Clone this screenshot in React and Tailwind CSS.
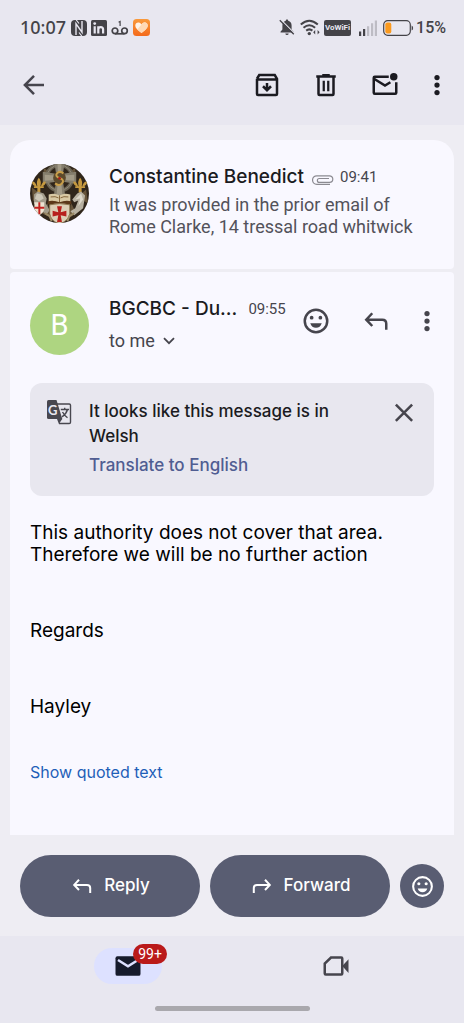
import { useState } from 'react';

const Icon = ({ className = 'size-[30px]', children }) => (
  <svg viewBox="0 0 24 24" className={className} fill="none" stroke="currentColor" strokeWidth="2" aria-hidden="true">
    {children}
  </svg>
);

const ArrowBack = () => (
  <Icon>
    <path d="M20 12H5.5M12 4.7L4.7 12l7.3 7.3" />
  </Icon>
);

const Archive = () => (
  <Icon>
    <path d="M4 7v12.2q0 .8.8.8h14.4q.8 0 .8-.8V7L18.2 4H5.8L4 7M4 7.6h16" />
    <path d="M12 10.3v5.5M8.8 13l3.2 3.2 3.2-3.2" />
  </Icon>
);

const Trash = () => (
  <Icon>
    <path d="M4.2 5.2h15.6M9 4.2h6M6 5.5v13.7q0 .8.8.8h10.4q.8 0 .8-.8V5.5" />
    <path d="M10.2 8.5V17M13.8 8.5V17" strokeWidth="1.8" />
  </Icon>
);

const MarkUnread = () => (
  <Icon>
    <path d="M15 5.3H3.8q-.8 0-.8.8v12.1q0 .8.8.8h16.4q.8 0 .8-.8V9.7" />
    <path d="M3.5 7.2l8.5 5.3 4.3-2.7" />
    <circle cx="19" cy="5.3" r="3" fill="currentColor" stroke="none" />
  </Icon>
);

const More = () => (
  <Icon>
    <g fill="currentColor" stroke="none">
      <circle cx="12" cy="6" r="2.1" />
      <circle cx="12" cy="12" r="2.1" />
      <circle cx="12" cy="18" r="2.1" />
    </g>
  </Icon>
);

const Smiley = ({ className }) => (
  <Icon className={className}>
    <circle cx="12" cy="12" r="9" />
    <g fill="currentColor" stroke="none">
      <circle cx="8.5" cy="9.3" r="1.5" />
      <circle cx="15.5" cy="9.3" r="1.5" />
      <path d="M7.4 13.8h9.2q-1.2 3.6-4.6 3.6t-4.6-3.6z" />
    </g>
  </Icon>
);

const ReplyIcon = ({ className }) => (
  <Icon className={className}>
    <path d="M9 5.8L4.2 10.9 9 16M4.2 10.9H17q3.2 0 3.2 3.2V19" />
  </Icon>
);

const ForwardIcon = ({ className }) => (
  <Icon className={className}>
    <path d="M15 5.8l4.8 5.1L15 16M19.8 10.9H7q-3.2 0-3.2 3.2V19" />
  </Icon>
);

const Nfc = () => (
  <svg viewBox="0 0 16 16" className="size-4" aria-hidden="true">
    <rect width="16" height="16" rx="4" fill="#444348" />
    <path d="M5 15V3.8l6 8.4V1" fill="none" stroke="#e8e7f0" strokeWidth="1.4" />
    <path d="M5.2 0L8 3.5M8 12.5l2.8 3.5" stroke="#e8e7f0" strokeWidth="1.2" />
  </svg>
);

const LinkedIn = () => (
  <svg viewBox="0 0 16 16" className="size-4" aria-hidden="true">
    <rect width="16" height="16" rx="1.5" fill="#444348" />
    <g fill="none" stroke="#e8e7f0" strokeWidth="2.2">
      <path d="M3.7 6.2v7.2M7.3 6.2v7.2M7.3 9.6q0-2.4 2.4-2.4t2.4 2.4v3.8" />
    </g>
    <circle cx="3.7" cy="3.6" r="1.4" fill="#e8e7f0" />
  </svg>
);

const Voicemail = () => (
  <svg viewBox="0 0 18 16" className="h-4 w-[18px]" fill="none" stroke="#444348" strokeWidth="1.7" aria-hidden="true">
    <circle cx="4" cy="10.8" r="2.8" />
    <circle cx="13.5" cy="10.8" r="2.8" />
    <path d="M4 13.8h9.5" />
    <path d="M7.6 2.3l1.5-.8V6" strokeWidth="1.2" />
  </svg>
);

const HeartApp = () => (
  <svg viewBox="0 0 17 17" className="size-[17px]" aria-hidden="true">
    <defs>
      <linearGradient id="heartApp" x1="0" y1="0" x2="0" y2="1">
        <stop offset="0" stopColor="#f99a3c" />
        <stop offset="1" stopColor="#f46a1b" />
      </linearGradient>
    </defs>
    <rect width="17" height="17" rx="3.5" fill="url(#heartApp)" />
    <path d="M8.5 14C4 10.8 2.3 8.8 2.3 6.6c0-3.2 4-4.2 6.2-1.2 2.2-3 6.2-2 6.2 1.2 0 2.2-1.7 4.2-6.2 7.4z" fill="#fff3e6" />
    <path d="M4.5 10.3L9.5 4.2C11.8 2.2 14.7 3.7 14.7 6.6c0 2.2-1.7 4.2-6.2 7.4-1.8-1.3-3-2.4-4-3.7z" fill="#ffd9b5" />
  </svg>
);

const BellOff = () => (
  <svg viewBox="0 0 16 17" className="h-[17px] w-4" aria-hidden="true">
    <path d="M8 .5c.8 0 1.2.5 1.2 1.2 2.4.6 3.4 2.4 3.4 4.8v4l1.9 2.2v.8h-13v-.8l1.9-2.2v-4c0-2.4 1-4.2 3.4-4.8C6.8 1 7.2.5 8 .5zM6.3 14.4h3.4Q9.500 16 8 16t-1.7-1.600z" fill="#444348" />
    <path d="M1.8.6l14 14" stroke="#e8e7f0" strokeWidth="1.3" />
    <path d="M.8 1.2l14 14" stroke="#444348" strokeWidth="1.3" />
  </svg>
);

const Wifi = () => (
  <svg viewBox="0 0 20 17" className="h-[17px] w-5" fill="none" stroke="#444348" strokeWidth="2" aria-hidden="true">
    <path d="M.8 5.6q8.5-7.6 17 0M3.5 8.7q5.8-5 11.6 0M6.2 11.6q3.1-2.5 6.2 0" />
    <circle cx="9.3" cy="14.6" r="1.7" fill="#444348" stroke="none" />
    <path d="M13.2 13.3l2-2.2v4.4zM19.6 13.3l-2-2.2v4.4z" fill="#444348" stroke="none" />
  </svg>
);

const Signal = () => (
  <svg viewBox="0 0 18 16" className="h-4 w-[18px]" aria-hidden="true">
    <path d="M0 11.5h2.2V16H0zM4 9h2.2v7H4z" fill="#444348" />
    <path d="M8 6.3h2.2V16H8zM12 3.3h2.2V16H12zM15.8.5H18V16h-2.2z" fill="#bdbcc4" />
  </svg>
);

const Battery = () => (
  <svg viewBox="0 0 31 16" className="h-4 w-[31px]" aria-hidden="true">
    <rect x=".7" y=".7" width="26.6" height="14.6" rx="4" fill="none" stroke="#444348" strokeWidth="1.2" />
    <rect x="2.3" y="2.5" width="6" height="11" rx="2" fill="#fb9a1e" />
    <path d="M28.600 5.5q1.5.5 1.5 2.5t-1.5 2.5z" fill="#444348" />
  </svg>
);

const Paperclip = () => (
  <svg viewBox="0 0 22 10" className="h-2.5 w-[22px]" fill="none" stroke="#8b8a91" strokeWidth="1.2" aria-label="Attachment">
    <path d="M18 9.3H4.8a4.2 4.2 0 010-8.5h12.700a3.3 3.3 0 010 6.6H7.3a1.9 1.9 0 010-3.900H17" />
  </svg>
);

const TranslateIcon = () => (
  <svg viewBox="0 0 26 26" className="size-[26px]" aria-hidden="true">
    <path d="M11 5h12.2q1.3 0 1.3 1.3v16.9q0 1.3-1.3 1.3H13.5L11 18" fill="none" stroke="#48474f" strokeWidth="1.4" />
    <path d="M2.5 1h8l5.8 19H2.5Q1 20 1 18.5v-16Q1 1 2.5 1z" fill="#48474f" />
    <path d="M11.8 20h4.5l-3 4.3z" fill="#48474f" />
    <text x="2" y="15.5" fontSize="13" fontWeight="700" fontFamily="Lato, sans-serif" fill="#e8e7f0">G</text>
    <path d="M14.8 10.5H23M18.7 8.7v1.8M21.5 10.5q-1.2 4.5-5.4 7.3M16.500 13q2 3.5 5 5.7" fill="none" stroke="#48474f" strokeWidth="1.4" />
  </svg>
);

// Heraldic crest: celtic cross, two supporters, open book and templar shield
const CrestAvatar = () => (
  <svg viewBox="0 0 60 60" className="size-[59px] shrink-0" role="img" aria-label="Constantine Benedict">
    <defs>
      <clipPath id="crestClip">
        <circle cx="30" cy="30" r="30" />
      </clipPath>
    </defs>
    <g clipPath="url(#crestClip)">
      <rect width="60" height="60" fill="#30261b" />
      <path d="M2 24l8 6-7 8zM48 34l9-8 2 14zM18 40l-6 10 8 4zM42 40l5 10-7 5zM14 4l6 4-6 6zM46 4l-6 4 6 6z" fill="#66543a" />
      <circle cx="30" cy="14" r="13" fill="none" stroke="#6a6353" strokeWidth="4" />
      <circle cx="30" cy="14" r="13" fill="none" stroke="#948c79" strokeWidth="1" />
      <path d="M25 0h10l-1.5 10L47 8v12l-13.5-2L36 33H24l2.5-15L13 20V8l13.500 2z" fill="#857e6d" />
      <path d="M28 0h4l-.5 12L45 11v6l-13.5-1L33 32h-6l1.5-16L15 17v-6l13.5 1z" fill="#a39b87" />
      <circle cx="30" cy="14" r="6.5" fill="#5c4a2c" />
      <path d="M34 9.5q-4-3-6.5 0t3 5q5 2 2 5.2t-7 0" fill="none" stroke="#c89e4a" strokeWidth="2" />
      <circle cx="30" cy="14.5" r="1.4" fill="#a81f1a" />
      <g fill="#c79a3f">
        <path d="M9 14q3 3.5 1.5 9h-3Q6 17.5 9 14zM7 23q-5-1-5-5 3-1 5 5zM11 23q5-1 5-5-3-1-5 5zM4 22.5h10v2H4zM7.5 24h3v5h-3z" />
        <path d="M51 14q3 3.5 1.5 9h-3Q48 17.5 51 14zM49 23q-5-1-5-5 3-1 5 5zM53 23q5-1 5-5-3-1-5 5zM46 22.5h10v2H46zM49.5 24h3v5h-3z" />
      </g>
      <path d="M4 31l4-3 6 2 3 5-1 5 4 7-3 4-7-4-6-7z" fill="#a39c8b" />
      <path d="M7 30l5 1 2 4-5 3-4-3z" fill="#cec8b8" />
      <path d="M56 32l-4-4-4 2-5 6 2 3 4-2-3 8-5 3 4 4 9-7z" fill="#b7b0a0" />
      <path d="M52 30l-6 6 5-1-2 8 5-7z" fill="#ddd8ca" />
      <path d="M19 31q6-2 11 1 5-3 11-1v8q-6-2-11 1-5-3-11-1z" fill="#d8c9a4" />
      <path d="M30 32v8M21 33.5q5-1 8 1M39 33.5q-5-1-8 1" fill="none" stroke="#84653a" strokeWidth="1" />
      <path d="M18 38q6-1.5 12 1 6-2.5 12-1v3H18z" fill="#5b3819" />
      <path d="M20 41.5Q30 39 40.5 41.5v9Q39 58 30 61 21 58 20 50.5z" fill="#dccfb6" stroke="#8c7751" />
      <path d="M27.5 43h5l-1.3 6 5.8-1.5v6L31.2 52l1.3 7h-5l1.3-7-5.8 1.5v-6l5.8 1.5z" fill="#b7201d" />
      <path d="M4.5 39h10v7q-1 4-5 6-4-2-5-6z" fill="#ece3d2" />
      <path d="M9.5 39v12M4.5 44.5h10" stroke="#c3221f" strokeWidth="2" />
      <path d="M15 50l5 3 2 5M45 50l-5 3-2 5" stroke="#9b8a66" strokeWidth="2" fill="none" />
    </g>
  </svg>
);

const StatusBar = () => (
  <div className="flex h-[55px] items-center pl-5 pr-[18px] text-[#444348]">
    <span className="font-['Noto_Sans',sans-serif] text-[18px] font-medium">10:07</span>
    <div className="ml-[5px] flex items-center gap-1">
      <Nfc />
      <LinkedIn />
      <Voicemail />
      <HeartApp />
    </div>
    <div className="ml-auto flex items-center">
      <BellOff />
      <span className="ml-[5px]"><Wifi /></span>
      <span className="ml-1 flex h-4 w-[27px] items-center justify-center rounded-xs bg-[#444348] font-['Roboto',sans-serif] text-[8px] font-bold text-[#e8e7f0]">
        VoWiFi
      </span>
      <span className="ml-2"><Signal /></span>
      <span className="ml-1.5"><Battery /></span>
      <span className="ml-0.5 font-['Roboto',sans-serif] text-[16px] font-medium">15%</span>
    </div>
  </div>
);

const Toolbar = () => (
  <div className="flex h-[70px] items-start pl-[19px] pr-3 pt-[15px] text-[#1b1b21]">
    <button type="button" aria-label="Back" className="text-[#46454d]"><ArrowBack /></button>
    <div className="ml-auto flex items-center gap-[29px]">
      <button type="button" aria-label="Archive"><Archive /></button>
      <button type="button" aria-label="Delete"><Trash /></button>
      <button type="button" aria-label="Mark as unread"><MarkUnread /></button>
    </div>
    <button type="button" aria-label="More options" className="ml-[22px]"><More /></button>
  </div>
);

const TranslateBanner = ({ onClose }) => (
  <section className="mx-5 flex items-start rounded-xl bg-[#e8e7ef] pb-[18px] pl-4 pr-[15px] pt-4">
    <TranslateIcon />
    <div className="ml-[17px] flex-1 font-['Inter',sans-serif] text-[17px] font-medium">
      <p className="leading-[25px] text-[#1b1b21]">
        It looks like this message is in
        <br />
        Welsh
      </p>
      <button type="button" className="mt-1 block leading-[25px] text-[#505d92]">Translate to English</button>
    </div>
    <button type="button" aria-label="Dismiss" onClick={onClose} className="text-[#46454d]">
      <Icon>
        <path d="M5.5 4.500l13 13M18.5 4.500l-13 13" />
      </Icon>
    </button>
  </section>
);

export default function App() {
  const [showBanner, setShowBanner] = useState(true);

  return (
    <div className="flex min-h-screen flex-col bg-[#eeedf3] font-['Roboto',sans-serif]">
      <header className="bg-[#e8e7f0]">
        <StatusBar />
        <Toolbar />
      </header>

      <main className="mx-2.5 mt-[15px] flex flex-1 flex-col gap-[3px]">
        <article className="flex gap-5 rounded-t-[20px] rounded-b-sm bg-[#f9f8ff] px-5 pb-[31px] pt-6">
          <CrestAvatar />
          <div className="min-w-0 flex-1">
            <div className="flex items-center whitespace-nowrap">
              <h2 className="font-['Inter',sans-serif] text-[19px] leading-[26px] font-medium text-[#1b1b21]">Constantine Benedict</h2>
              <span className="ml-2 mt-1.5"><Paperclip /></span>
              <time className="ml-1.5 text-[15px] text-[#46454d]">09:41</time>
            </div>
            <p className="mt-1 text-[18px] leading-[22px] text-[#53525a]">
              It was provided in the prior email of
              <br />
              Rome Clarke, 14 tressal road whitwick
            </p>
          </div>
        </article>

        <article className="flex flex-1 flex-col rounded-t-sm bg-[#f9f8ff] pt-6">
          <div className="flex items-start pl-5 pr-3 text-[#46454d]">
            <div className="flex size-[59px] shrink-0 items-center justify-center rounded-full bg-[#aed581] text-[29px] text-white">
              B
            </div>
            <div className="ml-5 min-w-0">
              <div className="flex items-center whitespace-nowrap">
                <h2 className="font-['Inter',sans-serif] text-[19px] leading-[26px] font-medium text-[#1b1b21]">BGCBC - Du...</h2>
                <time className="ml-[11px] text-[15px]">09:55</time>
              </div>
              <button type="button" className="mt-2 flex items-center gap-2 text-[18px] leading-[22px]">
                to me
                <svg viewBox="0 0 12 8" className="h-2 w-3" fill="none" stroke="currentColor" strokeWidth="1.8" aria-hidden="true">
                  <path d="M1 1.2l5 5 5-5" />
                </svg>
              </button>
            </div>
            <div className="ml-auto mt-2.5 flex items-center">
              <button type="button" aria-label="Add reaction"><Smiley /></button>
              <button type="button" aria-label="Reply" className="ml-[30px]"><ReplyIcon /></button>
              <button type="button" aria-label="More options" className="ml-[21px]"><More /></button>
            </div>
          </div>

          <div className="mt-7">
            {showBanner && <TranslateBanner onClose={() => setShowBanner(false)} />}
          </div>

          <div className="px-5 pt-[26px] font-['Inter',sans-serif] text-[19px] leading-[22px] text-black">
            <p>
              This authority does not cover that area.
              <br />
              Therefore we will be no further action
            </p>
            <p className="mt-[54px]">Regards</p>
            <p className="mt-[54px]">Hayley</p>
            <a href="#quoted" className="mt-[43px] block text-[16px] text-[#1f5fb8]">Show quoted text</a>
          </div>
        </article>
      </main>

      <div className="flex items-center gap-2.5 px-5 pb-[19px] pt-5 font-['Inter',sans-serif] text-[17px] font-medium text-white">
        <button type="button" className="flex h-[62px] flex-1 items-center justify-center gap-2.5 rounded-full bg-[#595d72]">
          <ReplyIcon className="size-6" />
          Reply
        </button>
        <button type="button" className="flex h-[62px] flex-1 items-center justify-center gap-2.5 rounded-full bg-[#595d72]">
          <ForwardIcon className="size-6" />
          Forward
        </button>
        <button type="button" aria-label="Add reaction" className="flex size-11 shrink-0 items-center justify-center rounded-full bg-[#595d72]">
          <Smiley className="size-[25px]" />
        </button>
      </div>

      <nav className="bg-[#e8e7f0] px-6 pt-3">
        <div className="grid grid-cols-2 justify-items-center">
          <button type="button" aria-label="Mail" className="relative flex h-9 w-[68px] items-center justify-center rounded-full bg-[#dde1ff]">
            <Icon>
              <path d="M3.5 4.2h17q1.5 0 1.5 1.5v12.6q0 1.5-1.5 1.5h-17q-1.5 0-1.5-1.5V5.7q0-1.5 1.5-1.5z" fill="#161b2c" stroke="none" />
              <path d="M4 7.2l8 5 8-5" stroke="#dde1ff" />
            </Icon>
            <span className="absolute -right-[5px] -top-1 flex h-5 w-[34px] items-center justify-center rounded-full bg-[#ba1a1a] text-[14px] text-white">
              99+
            </span>
          </button>
          <button type="button" aria-label="Meet" className="flex h-9 w-[68px] items-center justify-center text-[#46454d]">
            <Icon>
              <path d="M8 5.2h8.2q.8 0 .8.8v12q0 .8-.8.8H3.8q-.8 0-.8-.8V10z" />
              <path d="M17 12l5-5.500v11z" fill="currentColor" stroke="none" />
            </Icon>
          </button>
        </div>
        <div className="mx-auto mb-3 mt-[22px] h-[5px] w-[155px] rounded-full bg-[#a9a8ad]" />
      </nav>
    </div>
  );
}
